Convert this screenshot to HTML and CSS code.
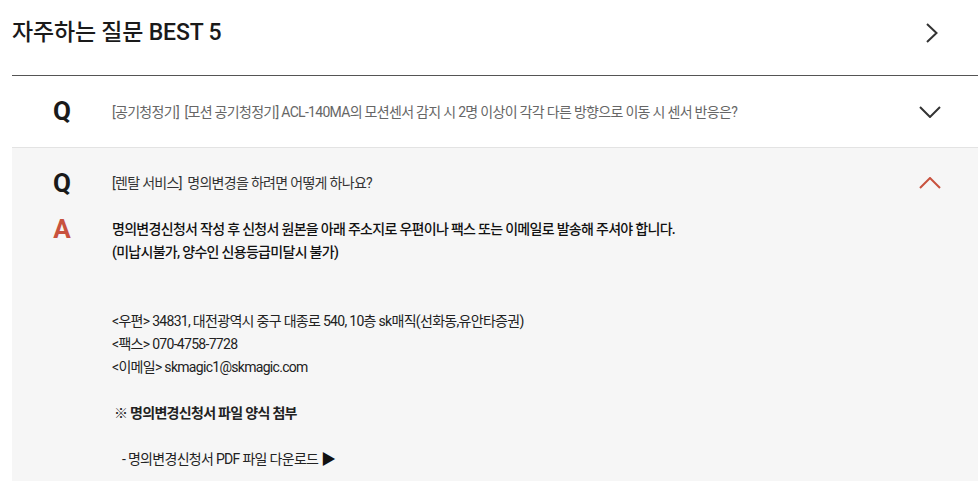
FILE: index.html
```html
<!DOCTYPE html>
<html lang="ko">
<head>
<meta charset="utf-8">
<title>자주하는 질문 BEST 5</title>
<link rel="stylesheet" href="styles.css">
</head>
<body>
<section class="faq">
  <div class="faq-head">
    <h2 class="faq-title">자주하는 질문 BEST 5</h2>
    <svg class="head-arrow" width="12" height="20" viewBox="0 0 12 20" aria-hidden="true"><path d="M1 1 L10.5 10 L1 19" fill="none" stroke="#333" stroke-width="2"/></svg>
  </div>
  <ul class="faq-list">
    <li class="faq-item">
      <div class="faq-q">
        <span class="mark mark-q">Q</span>
        <p class="q-text">[공기청정기] &nbsp;[모션 공기청정기] ACL-140MA의 모션센서 감지 시 2명 이상이 각각 다른 방향으로 이동 시 센서 반응은?</p>
        <svg class="toggle" width="22" height="12" viewBox="0 0 22 12" aria-hidden="true"><path d="M1 1 L11 11 L21 1" fill="none" stroke="#333" stroke-width="2"/></svg>
      </div>
    </li>
    <li class="faq-item open">
      <div class="faq-q">
        <span class="mark mark-q">Q</span>
        <p class="q-text">[렌탈 서비스] &nbsp;명의변경을 하려면 어떻게 하나요?</p>
        <svg class="toggle" width="22" height="12" viewBox="0 0 22 12" aria-hidden="true"><path d="M1 11 L11 1 L21 11" fill="none" stroke="#c8523e" stroke-width="2"/></svg>
      </div>
      <div class="faq-a">
        <span class="mark mark-a">A</span>
        <div class="a-body">
          <p class="a-strong">명의변경신청서 작성 후 신청서 원본을 아래 주소지로 우편이나 팩스 또는 이메일로 발송해 주셔야 합니다.<br>(미납시불가, 양수인 신용등급미달시 불가)</p>
          <p class="a-gap"><br><br></p>
          <p>&lt;우편&gt; 34831, 대전광역시 중구 대종로 540, 10층 sk매직(선화동,유안타증권)<br>&lt;팩스&gt; 070-4758-7728<br>&lt;이메일&gt; skmagic1@skmagic.com</p>
          <p class="a-gap"><br></p>
          <p class="a-note">※ 명의변경신청서 파일 양식 첨부</p>
          <p class="a-gap"><br></p>
          <p class="a-link">- 명의변경신청서 PDF 파일 다운로드 <span class="tri">▶</span></p>
        </div>
      </div>
    </li>
  </ul>
</section>
</body>
</html>
```
FILE: styles.css
```css
* { box-sizing: border-box; }
html, body { margin: 0; padding: 0; background: #fff; }
body {
  font-family: Roboto, "Noto Sans CJK KR", sans-serif;
  color: #222;
  overflow: hidden;
}
.faq { padding-left: 12px; }
.faq-head {
  display: flex;
  justify-content: space-between;
  align-items: flex-start;
  height: 76px;
  padding: 19px 40px 0 0;
  border-bottom: 1px solid #555;
}
.faq-title {
  margin: 0;
  font-size: 23px;
  font-weight: 500;
  line-height: 28px;
  color: #1a1a1a;
  letter-spacing: -0.2px;
}
.head-arrow { margin-top: 4px; display: block; }
.faq-list { list-style: none; margin: 0; padding: 0; }
.faq-item { border-bottom: 1px solid #e3e3e3; }
.faq-item.open { background: #f6f6f6; border-bottom: 0; }
.faq-q {
  display: grid;
  grid-template-columns: 100px 1fr auto;
  align-items: center;
  height: 71px;
  padding-right: 37px;
}
.faq-item.open .faq-q { height: 70px; }
.mark {
  text-align: center;
  font-family: Roboto, sans-serif;
  font-weight: 700;
  font-size: 26px;
  line-height: 23px;
}
.mark-q { color: #1a1a1a; }
.mark-a { color: #c8523e; }
.q-text {
  margin: 0;
  font-size: 14px;
  color: #666;
  letter-spacing: -0.7px;
  line-height: 20px;
}
.faq-item.open .q-text { color: #333; }
.toggle { display: block; }
.faq-a {
  display: grid;
  grid-template-columns: 100px 1fr;
  align-items: start;
  padding-bottom: 30px;
}
.a-body {
  font-size: 14px;
  line-height: 23px;
  color: #222;
  letter-spacing: -0.7px;
}
.a-body p { margin: 0; }
.a-strong { font-weight: 500; color: #111; }
.a-note { font-weight: 700; padding-left: 2px; }
.a-link { padding-left: 10px; }
.tri { font-size: 15px; color: #111; }
```
